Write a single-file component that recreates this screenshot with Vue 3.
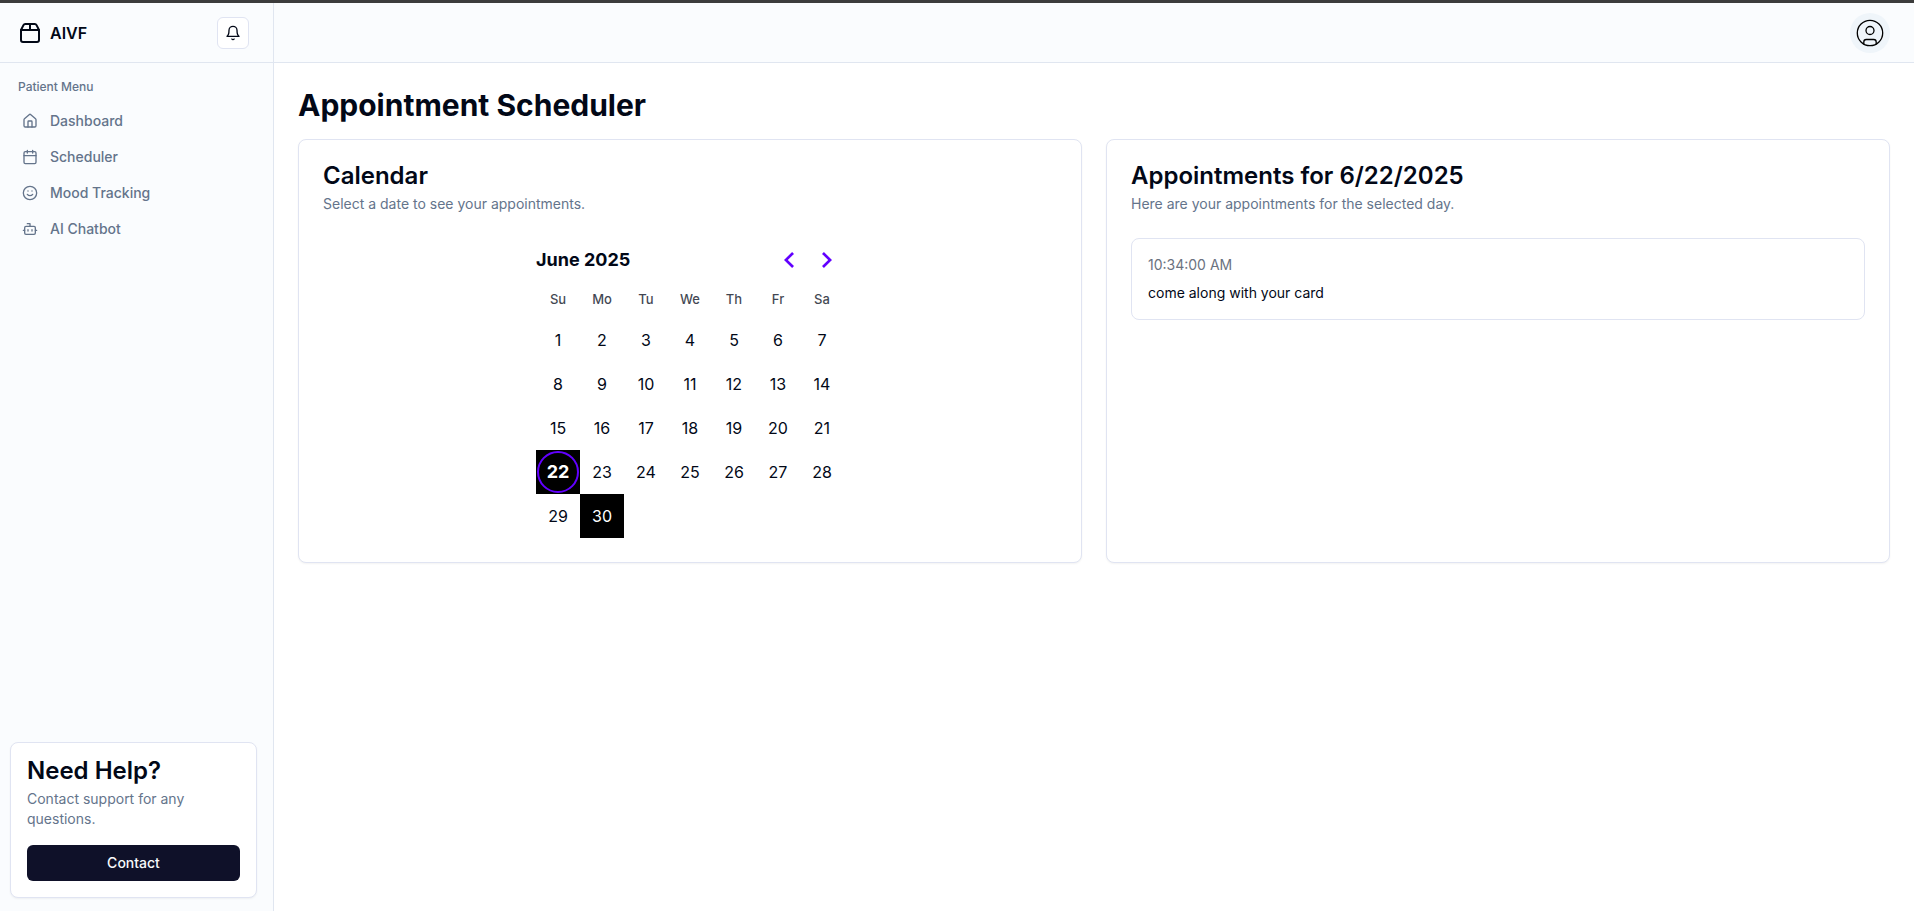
<script setup>
import { ref } from 'vue'

const navItems = [
  { label: 'Dashboard', icon: 'home' },
  { label: 'Scheduler', icon: 'calendar' },
  { label: 'Mood Tracking', icon: 'smile' },
  { label: 'AI Chatbot', icon: 'bot' },
]

const weekdays = ['Su', 'Mo', 'Tu', 'We', 'Th', 'Fr', 'Sa']
const weeks = [0, 1, 2, 3, 4].map((w) =>
  [1, 2, 3, 4, 5, 6, 7].map((d) => {
    const day = w * 7 + d
    return day <= 30 ? day : null
  })
)
const selected = ref(22)
const booked = [22, 30]

const appointments = [{ time: '10:34:00 AM', note: 'come along with your card' }]
</script>

<template>
  <div class="shell">
    <aside class="sidebar">
      <div class="brand-row">
        <a class="brand" href="#">
          <svg class="icon-lg" viewBox="0 0 24 24" aria-hidden="true">
            <path d="M3 9h18v10a2 2 0 0 1-2 2H5a2 2 0 0 1-2-2V9Z" />
            <path d="m3 9 2.45-4.9A2 2 0 0 1 7.24 3h9.52a2 2 0 0 1 1.8 1.1L21 9" />
            <path d="M12 3v6" />
          </svg>
          <span>AIVF</span>
        </a>
        <button class="bell" type="button" aria-label="Toggle notifications">
          <svg class="icon-sm" viewBox="0 0 24 24" aria-hidden="true">
            <path d="M6 8a6 6 0 0 1 12 0c0 7 3 9 3 9H3s3-2 3-9" />
            <path d="M10.3 21a1.94 1.94 0 0 0 3.4 0" />
          </svg>
        </button>
      </div>

      <nav class="menu">
        <h2 class="menu-title">Patient Menu</h2>
        <a v-for="item in navItems" :key="item.label" class="menu-item" href="#">
          <svg class="icon-sm" viewBox="0 0 24 24" aria-hidden="true">
            <template v-if="item.icon === 'home'">
              <path d="M15 21v-8a1 1 0 0 0-1-1h-4a1 1 0 0 0-1 1v8" />
              <path d="M3 10a2 2 0 0 1 .709-1.528l7-5.999a2 2 0 0 1 2.582 0l7 5.999A2 2 0 0 1 21 10v9a2 2 0 0 1-2 2H5a2 2 0 0 1-2-2z" />
            </template>
            <template v-else-if="item.icon === 'calendar'">
              <path d="M8 2v4M16 2v4M3 10h18" />
              <rect width="18" height="18" x="3" y="4" rx="2" />
            </template>
            <template v-else-if="item.icon === 'smile'">
              <circle cx="12" cy="12" r="10" />
              <path d="M8 14s1.5 2 4 2 4-2 4-2M9 9h.01M15 9h.01" />
            </template>
            <template v-else>
              <path d="M12 8V4H8" />
              <rect width="16" height="12" x="4" y="8" rx="2" />
              <path d="M2 14h2M20 14h2M15 13v2M9 13v2" />
            </template>
          </svg>
          <span>{{ item.label }}</span>
        </a>
      </nav>

      <section class="card help">
        <h2 class="card-title">Need Help?</h2>
        <p class="card-desc">Contact support for any questions.</p>
        <button class="contact" type="button">Contact</button>
      </section>
    </aside>

    <div class="page">
      <header class="topbar">
        <button class="avatar" type="button" aria-label="Toggle user menu">
          <svg viewBox="0 0 32 32" aria-hidden="true">
            <circle cx="16" cy="16" r="12.700" />
            <circle cx="16" cy="13.500" r="4" />
            <path d="M9.800 27v-2a2.500 2.500 0 0 1 2.500-2.500h7.400a2.500 2.500 0 0 1 2.500 2.500v2" />
          </svg>
        </button>
      </header>

      <main class="content">
        <h1 class="page-title">Appointment Scheduler</h1>
        <div class="cards">
          <section class="card panel">
            <h2 class="card-title">Calendar</h2>
            <p class="card-desc">Select a date to see your appointments.</p>
            <div class="calendar">
              <div class="calendar-head">
                <span class="month">June 2025</span>
                <div class="arrows">
                  <button class="arrow" type="button" aria-label="Go to the Previous Month">
                    <svg viewBox="0 0 24 24" aria-hidden="true">
                      <polygon points="16 18.112 9.811 12 16 5.877 14.089 4 6 12 14.089 20" />
                    </svg>
                  </button>
                  <button class="arrow" type="button" aria-label="Go to the Next Month">
                    <svg viewBox="0 0 24 24" aria-hidden="true">
                      <polygon points="8 18.112 14.189 12 8 5.877 9.911 4 18 12 9.911 20" />
                    </svg>
                  </button>
                </div>
              </div>
              <table class="month-grid" aria-label="June 2025">
                <thead>
                  <tr>
                    <th v-for="d in weekdays" :key="d" scope="col">{{ d }}</th>
                  </tr>
                </thead>
                <tbody>
                  <tr v-for="(week, i) in weeks" :key="i">
                    <td
                      v-for="(day, j) in week"
                      :key="j"
                      :class="{ booked: booked.includes(day), selected: day === selected }"
                    >
                      <button v-if="day" class="day" type="button" @click="selected = day">{{ day }}</button>
                    </td>
                  </tr>
                </tbody>
              </table>
            </div>
          </section>

          <section class="card panel">
            <h2 class="card-title">Appointments for 6/{{ selected }}/2025</h2>
            <p class="card-desc">Here are your appointments for the selected day.</p>
            <ul class="appointments">
              <li v-for="a in appointments" :key="a.time" class="appointment">
                <p class="time">{{ a.time }}</p>
                <p>{{ a.note }}</p>
              </li>
            </ul>
          </section>
        </div>
      </main>
    </div>
  </div>
</template>

<style>
body {
  margin: 0;
  background: #fff;
}
</style>

<style scoped>
.shell,
.shell * {
  box-sizing: border-box;
}

.shell {
  display: grid;
  grid-template-columns: 274px 1fr;
  min-height: 100vh;
  border-top: 3px solid #3c3c3c;
  font-family: Inter, "Liberation Sans", sans-serif;
  font-size: 14px;
  line-height: 20px;
  color: #020817;
}

h1,
h2,
p,
ul {
  margin: 0;
  padding: 0;
}

button {
  padding: 0;
  border: 0;
  background: none;
  color: inherit;
  font: inherit;
  cursor: pointer;
}

a {
  color: inherit;
  text-decoration: none;
}

svg {
  display: block;
  fill: none;
  stroke: currentColor;
  stroke-width: 2;
  stroke-linecap: round;
  stroke-linejoin: round;
}

.icon-sm {
  width: 16px;
  height: 16px;
}

.icon-lg {
  width: 24px;
  height: 24px;
}

.sidebar {
  display: flex;
  flex-direction: column;
  border-right: 1px solid #e0e6f0;
  background: #fafcfe;
}

.brand-row {
  display: flex;
  align-items: center;
  justify-content: space-between;
  height: 60px;
  padding: 0 24px 0 18px;
  border-bottom: 1px solid #e0e6f0;
}

.brand {
  display: flex;
  align-items: center;
  gap: 8px;
  font-size: 16px;
  font-weight: 600;
  line-height: 24px;
}

.bell {
  display: grid;
  place-items: center;
  width: 32px;
  height: 32px;
  border: 1px solid #e0e4f2;
  border-radius: 6px;
  background: #fff;
}

.menu {
  display: flex;
  flex: 1;
  flex-direction: column;
  padding: 16px 18px;
  color: #64748b;
  font-weight: 500;
}

.menu-title {
  margin-bottom: 8px;
  font-size: 12px;
  font-weight: 500;
  line-height: 16px;
}

.menu-item {
  display: flex;
  align-items: center;
  gap: 12px;
  padding: 8px 4px;
}

.card {
  border: 1px solid #e0e4f2;
  border-radius: 8px;
  background: #fff;
  box-shadow: 0 1px 2px rgba(0, 0, 0, 0.05);
}

.card-title {
  margin-bottom: 6px;
  font-size: 24px;
  font-weight: 600;
  line-height: 24px;
}

.card-desc {
  color: #64748b;
}

.help {
  margin: 0 16px 13px 10px;
  padding: 16px;
}

.contact {
  width: 100%;
  height: 36px;
  margin-top: 16px;
  border-radius: 6px;
  background: #0f1129;
  color: #f8fafc;
  font-weight: 500;
}

.page {
  display: flex;
  flex-direction: column;
  min-width: 0;
}

.topbar {
  display: flex;
  align-items: center;
  justify-content: flex-end;
  height: 60px;
  padding: 0 24px;
  border-bottom: 1px solid #e0e6f0;
  background: #fafcfe;
}

.avatar {
  display: grid;
  place-items: center;
  width: 40px;
  height: 40px;
  border-radius: 50%;
  background: #eff5fa;
}

.avatar svg {
  width: 32px;
  height: 32px;
  stroke: #000;
  stroke-width: 1.3;
}

.content {
  display: flex;
  flex-direction: column;
  gap: 16px;
  padding: 24px;
}

.page-title {
  font-size: 30px;
  font-weight: 700;
  line-height: 36px;
}

.cards {
  display: grid;
  grid-template-columns: 1fr 1fr;
  gap: 24px;
}

.panel {
  padding: 24px;
}

.calendar {
  width: 308px;
  margin: 24px auto 0;
}

.calendar-head {
  display: flex;
  align-items: center;
  justify-content: space-between;
  height: 44px;
}

.month {
  font-size: 18px;
  font-weight: 700;
}

.arrows {
  display: flex;
}

.arrow {
  display: grid;
  place-items: center;
  width: 36px;
  height: 36px;
}

.arrow svg {
  width: 24px;
  height: 24px;
  fill: #6200ff;
  stroke: none;
}

.month-grid {
  width: 100%;
  table-layout: fixed;
  border-collapse: collapse;
}

.month-grid th {
  height: 36px;
  padding: 0 0 2px;
  font-size: 13px;
  font-weight: 500;
  opacity: 0.75;
}

.month-grid td {
  height: 44px;
  padding: 0;
  font-size: 16px;
}

.day {
  display: block;
  width: 42px;
  height: 42px;
  margin: 0 auto;
  border: 2px solid transparent;
  border-radius: 50%;
}

.booked {
  background: #000;
  color: #fff;
}

.selected .day {
  border-color: #6200ff;
  font-size: 18px;
  font-weight: 700;
}

.appointments {
  display: grid;
  gap: 16px;
  margin-top: 24px;
  list-style: none;
}

.appointment {
  display: grid;
  gap: 8px;
  padding: 16px;
  border: 1px solid #e0e4f2;
  border-radius: 8px;
}

.time {
  color: #6b7280;
}
</style>
